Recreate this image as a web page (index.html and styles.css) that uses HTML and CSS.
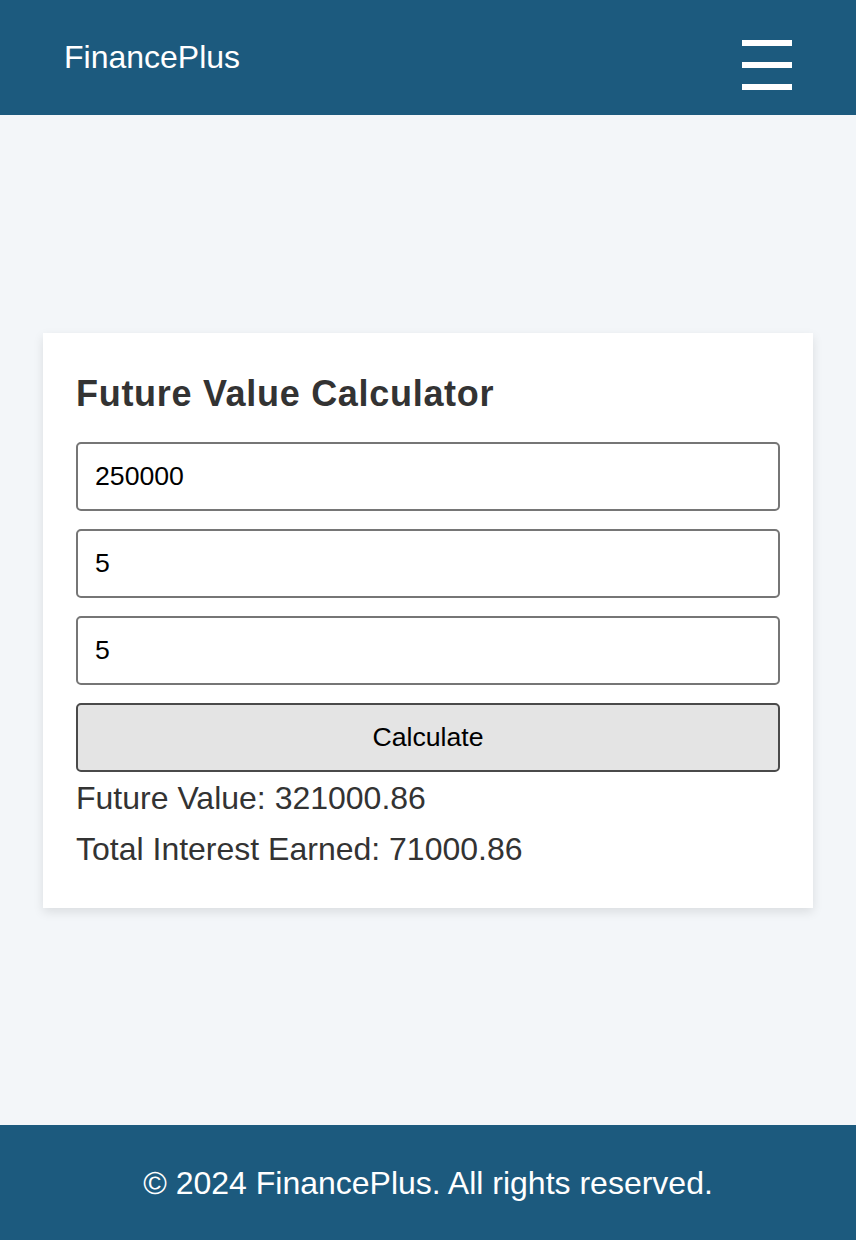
FILE: index.html
```html
<!DOCTYPE html>
<html lang="en">
<head>
<meta charset="utf-8">
<title>FinancePlus</title>
<link rel="stylesheet" href="styles.css">
</head>
<body>
<div class="page">
  <header class="site-header">
    <div class="logo">FinancePlus</div>
    <button class="menu-btn" aria-label="Menu">
      <span class="bar"></span>
      <span class="bar"></span>
      <span class="bar"></span>
    </button>
  </header>
  <main class="main">
    <section class="card">
      <h2 class="card-title">Future Value Calculator</h2>
      <input class="field" type="text" value="250000">
      <input class="field" type="text" value="5">
      <input class="field" type="text" value="5">
      <button class="calc-btn">Calculate</button>
      <p class="result result-first">Future Value: 321000.86</p>
      <p class="result result-second">Total Interest Earned: 71000.86</p>
    </section>
  </main>
  <footer class="site-footer">
    <p class="footer-text">© 2024 FinancePlus. All rights reserved.</p>
  </footer>
</div>
</body>
</html>
```

FILE: styles.css
```css
* { box-sizing: border-box; }
html, body { margin: 0; padding: 0; }
body {
  font-family: "Liberation Sans", Arial, Helvetica, sans-serif;
  background: #f3f6f9;
  color: #333;
}
.page {
  min-height: 1240px;
  display: flex;
  flex-direction: column;
}
.site-header {
  background: #1c5a7e;
  height: 115px;
  padding: 39px 64px 0 64px;
  display: flex;
  justify-content: space-between;
  align-items: flex-start;
}
.logo {
  color: #fff;
  font-size: 32px;
  line-height: 37px;
}
.menu-btn {
  margin-top: 1px;
  padding: 0;
  border: 0;
  background: transparent;
  width: 50px;
  display: flex;
  flex-direction: column;
  gap: 16px;
}
.bar {
  display: block;
  width: 50px;
  height: 6px;
  background: #fff;
}
.main {
  flex: 1;
  display: flex;
  align-items: center;
  justify-content: center;
}
.card {
  width: 770px;
  background: #fff;
  padding: 33px 33px 40px 33px;
  box-shadow: 0 4px 10px rgba(0, 0, 0, 0.1);
  display: flex;
  flex-direction: column;
}
.card-title {
  margin: 7px 0 27px 0;
  font-size: 36px;
  line-height: 42px;
  font-weight: bold;
  letter-spacing: 0.7px;
  color: #333;
}
.field {
  display: block;
  width: 100%;
  height: 69px;
  margin: 0 0 18px 0;
  padding: 0 17px;
  border: 2px solid #767676;
  border-radius: 5px;
  font-family: "Liberation Sans", Arial, Helvetica, sans-serif;
  font-size: 26.67px;
  color: #000;
  background: #fff;
}
.calc-btn {
  display: block;
  width: 100%;
  height: 69px;
  margin: 0;
  border: 2px solid #4a4a4a;
  border-radius: 5px;
  background: #e4e4e4;
  font-family: "Liberation Sans", Arial, Helvetica, sans-serif;
  font-size: 26.67px;
  color: #000;
}
.result {
  margin: 0;
  font-size: 32px;
  line-height: 37px;
  color: #333;
}
.result-first { margin-top: 8px; }
.result-second { margin-top: 14px; }
.site-footer {
  background: #1c5a7e;
  height: 115px;
  padding-top: 40px;
  text-align: center;
}
.footer-text {
  margin: 0;
  color: #fff;
  font-size: 32px;
  line-height: 37px;
}
```
